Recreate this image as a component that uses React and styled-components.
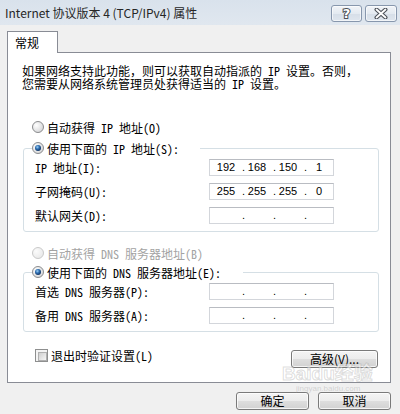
import React from 'react'
import styled, { createGlobalStyle } from 'styled-components'

const UI_FONT = `"Noto Sans CJK SC", "Noto Sans", sans-serif`
const DLG_FONT = `"Noto Sans Mono CJK SC", "Noto Sans CJK SC", monospace`

const GlobalStyle = createGlobalStyle`
  html, body { margin: 0; padding: 0; background: #f0f0f0; }
`

const Window = styled.div`
  position: relative;
  width: 400px;
  height: 414px;
  overflow: hidden;
  background: #f0f0f0;
  display: flex;
  flex-direction: column;
`

const TitleBar = styled.div`
  height: 25px;
  flex: none;
  display: flex;
  align-items: flex-start;
  padding: 0 3px 0 5px;
  background: linear-gradient(#d9e2ec, #e0e7ef);
`

const Title = styled.div`
  flex: 1;
  font: 12px/26px ${UI_FONT};
  color: #262626;
`

const CaptionButtons = styled.div`
  display: flex;
  gap: 3px;
  margin-top: 5px;
`

const CaptionButton = styled.div`
  width: ${p => p.$w}px;
  height: 17px;
  box-sizing: border-box;
  border: 1px solid #8797ad;
  border-radius: 3px;
  background: linear-gradient(#f1f4f8 0%, #e4eaf1 50%, #d6dee8 51%, #dfe6ee 100%);
  box-shadow: inset 0 0 0 1px rgba(255, 255, 255, 0.6);
  display: flex;
  align-items: center;
  justify-content: center;
  font: bold 13px/15px "DejaVu Sans", sans-serif;
  color: #fff;
  -webkit-text-stroke: 2px #4a4f57;
  paint-order: stroke fill;
`

const Content = styled.div`
  padding: 6px 9px 0 7px;
`

const TabStrip = styled.div`
  display: flex;
  height: 21px;
`

const Tab = styled.div`
  position: relative;
  z-index: 1;
  width: 51px;
  height: 22px;
  box-sizing: border-box;
  border: 1px solid #898c95;
  border-bottom: none;
  background: #fff;
  padding-left: 7px;
  font: 12px/21px ${UI_FONT};
  color: #000;
`

const Panel = styled.div`
  width: 384px;
  height: 331px;
  box-sizing: border-box;
  border: 1px solid #898c95;
  background: #fff;
  padding-top: 11px;
  font: 12px ${DLG_FONT};
  color: #000;
  display: flex;
  flex-direction: column;
`

const Description = styled.p`
  margin: 0 0 0 14px;
  line-height: 13px;
`

const RadioRow = styled.label`
  display: flex;
  align-items: center;
  gap: 3px;
  height: 16px;
  margin: ${p => p.$mt || 0}px 0 0 ${p => p.$ml || 0}px;
  color: ${p => (p.$disabled ? '#a3a3a3' : '#000')};
  white-space: nowrap;
`

const RadioSvg = styled.svg`
  flex: none;
`

const Group = styled.fieldset`
  width: 356px;
  box-sizing: border-box;
  margin: ${p => p.$mt}px 0 0 15px;
  border: 1px solid #d5dfe5;
  border-radius: 3px;
  padding: 3px 0 7px 11px;
  min-width: 0;
`

const Legend = styled.legend`
  width: ${p => p.$w}px;
  padding: 0;
  margin-left: -3px;
`

const Rows = styled.div`
  display: flex;
  flex-direction: column;
  gap: 7px;
`

const FieldRow = styled.div`
  display: flex;
  align-items: center;
  height: 17px;
`

const FieldLabel = styled.span`
  width: 174px;
  white-space: nowrap;
`

const IpBox = styled.div`
  width: 125px;
  height: 17px;
  box-sizing: border-box;
  border: 1px solid #d3d6db;
  border-top-color: #b9bcc2;
  padding-left: 4px;
  display: flex;
  font: 11px/15px "Liberation Sans", Arial, sans-serif;
  color: #000;
`

const Octet = styled.span`
  width: 24px;
  text-align: center;
`

const Dot = styled.span`
  width: 7px;
  text-align: right;
`

const BottomRow = styled.div`
  display: flex;
  justify-content: space-between;
  align-items: flex-start;
  margin: 17px 12px 0 27px;
`

const CheckLabel = styled.label`
  display: flex;
  align-items: center;
  gap: 3px;
  height: 13px;
  white-space: nowrap;
`

const CheckBox = styled.span`
  width: 13px;
  height: 13px;
  box-sizing: border-box;
  border: 1px solid #8e8f8f;
  padding: 2px;
  background: #f4f4f4;
  &::after {
    content: '';
    display: block;
    width: 7px;
    height: 7px;
    border: 1px solid #b0b0b0;
    background: linear-gradient(135deg, #cfcfcf, #f6f6f6);
  }
`

const PushButton = styled.button`
  width: ${p => p.$w}px;
  height: 18px;
  margin-top: ${p => p.$mt || 0}px;
  box-sizing: border-box;
  padding: 0;
  border: 1px solid #7a7a7a;
  border-radius: 3px;
  background: linear-gradient(#f4f4f4 0%, #ececec 50%, #dedede 51%, #d2d2d2 100%);
  box-shadow: inset 0 0 0 1px rgba(255, 255, 255, 0.75);
  font: 12px/16px ${UI_FONT};
  color: #000;
`

const Footer = styled.div`
  display: flex;
  justify-content: flex-end;
  gap: 9px;
  margin-top: 9px;
`

const Watermark = styled.div`
  position: absolute;
  left: 282px;
  top: 364px;
  font: bold 19px/20px "Liberation Sans", "Noto Sans CJK SC", sans-serif;
  color: rgba(255, 255, 255, 0.55);
  -webkit-text-stroke: 1px rgba(140, 140, 140, 0.3);
  pointer-events: none;
  small {
    display: block;
    font: 8px/9px "Liberation Sans", sans-serif;
    -webkit-text-stroke: 0;
    color: rgba(150, 150, 150, 0.35);
    padding-left: 14px;
  }
`

const Radio = ({ checked, disabled }) => (
  <RadioSvg width="12" height="12" viewBox="0 0 12 12">
    <defs>
      <radialGradient id="radioFace" cx="0.35" cy="0.35" r="0.8">
        <stop offset="0" stopColor="#ffffff" />
        <stop offset="1" stopColor="#cfd0d2" />
      </radialGradient>
      <radialGradient id="radioFaceOff" cx="0.35" cy="0.35" r="0.8">
        <stop offset="0" stopColor="#fbfbfb" />
        <stop offset="1" stopColor="#e6e6e6" />
      </radialGradient>
      <radialGradient id="radioDot" cx="0.4" cy="0.35" r="0.7">
        <stop offset="0" stopColor="#9fd3f5" />
        <stop offset="0.45" stopColor="#2f6fb3" />
        <stop offset="1" stopColor="#0c2a55" />
      </radialGradient>
    </defs>
    <circle
      cx="6"
      cy="6"
      r="5.5"
      fill={disabled ? 'url(#radioFaceOff)' : 'url(#radioFace)'}
      stroke={disabled ? '#c9c9c9' : '#8b8c8e'}
    />
    {checked && <circle cx="6" cy="6" r="3" fill="url(#radioDot)" />}
  </RadioSvg>
)

const IpField = ({ value }) => {
  const parts = value ? value.split('.') : ['', '', '', '']
  return (
    <IpBox>
      {parts.map((p, i) => (
        <React.Fragment key={i}>
          {i > 0 && <Dot>.</Dot>}
          <Octet>{p}</Octet>
        </React.Fragment>
      ))}
    </IpBox>
  )
}

const Field = ({ label, value }) => (
  <FieldRow>
    <FieldLabel>{label}</FieldLabel>
    <IpField value={value} />
  </FieldRow>
)

export default function App() {
  return (
    <Window>
      <GlobalStyle />
      <TitleBar>
        <Title>Internet 协议版本 4 (TCP/IPv4) 属性</Title>
        <CaptionButtons>
          <CaptionButton $w={31}>?</CaptionButton>
          <CaptionButton $w={32}>
            <svg width="14" height="11" viewBox="0 0 14 11">
              <path d="M2.5 1.5 L11.5 9.5 M11.5 1.5 L2.5 9.5" stroke="#4a4f57" strokeWidth="4" strokeLinecap="round" />
              <path d="M2.5 1.5 L11.5 9.5 M11.5 1.5 L2.5 9.5" stroke="#ffffff" strokeWidth="1.8" strokeLinecap="round" />
            </svg>
          </CaptionButton>
        </CaptionButtons>
      </TitleBar>

      <Content>
        <TabStrip>
          <Tab>常规</Tab>
        </TabStrip>
        <Panel>
          <Description>
            如果网络支持此功能，则可以获取自动指派的 IP 设置。否则，
            <br />
            您需要从网络系统管理员处获得适当的 IP 设置。
          </Description>

          <RadioRow $mt={29} $ml={24}>
            <Radio />
            自动获得 IP 地址(O)
          </RadioRow>

          <Group $mt={5}>
            <Legend $w={168}>
              <RadioRow>
                <Radio checked />
                使用下面的 IP 地址(S):
              </RadioRow>
            </Legend>
            <Rows>
              <Field label="IP 地址(I):" value="192.168.150.1" />
              <Field label="子网掩码(U):" value="255.255.255.0" />
              <Field label="默认网关(D):" />
            </Rows>
          </Group>

          <RadioRow $mt={13} $ml={24} $disabled>
            <Radio disabled />
            自动获得 DNS 服务器地址(B)
          </RadioRow>

          <Group $mt={3}>
            <Legend $w={211}>
              <RadioRow>
                <Radio checked />
                使用下面的 DNS 服务器地址(E):
              </RadioRow>
            </Legend>
            <Rows>
              <Field label="首选 DNS 服务器(P):" />
              <Field label="备用 DNS 服务器(A):" />
            </Rows>
          </Group>

          <BottomRow>
            <CheckLabel>
              <CheckBox />
              退出时验证设置(L)
            </CheckLabel>
            <PushButton $w={87} $mt={1}>高级(V)...</PushButton>
          </BottomRow>
        </Panel>

        <Footer>
          <PushButton $w={73}>确定</PushButton>
          <PushButton $w={73}>取消</PushButton>
        </Footer>
      </Content>

      <Watermark>
        Baidu经验
        <small>jingyan.baidu.com</small>
      </Watermark>
    </Window>
  )
}
